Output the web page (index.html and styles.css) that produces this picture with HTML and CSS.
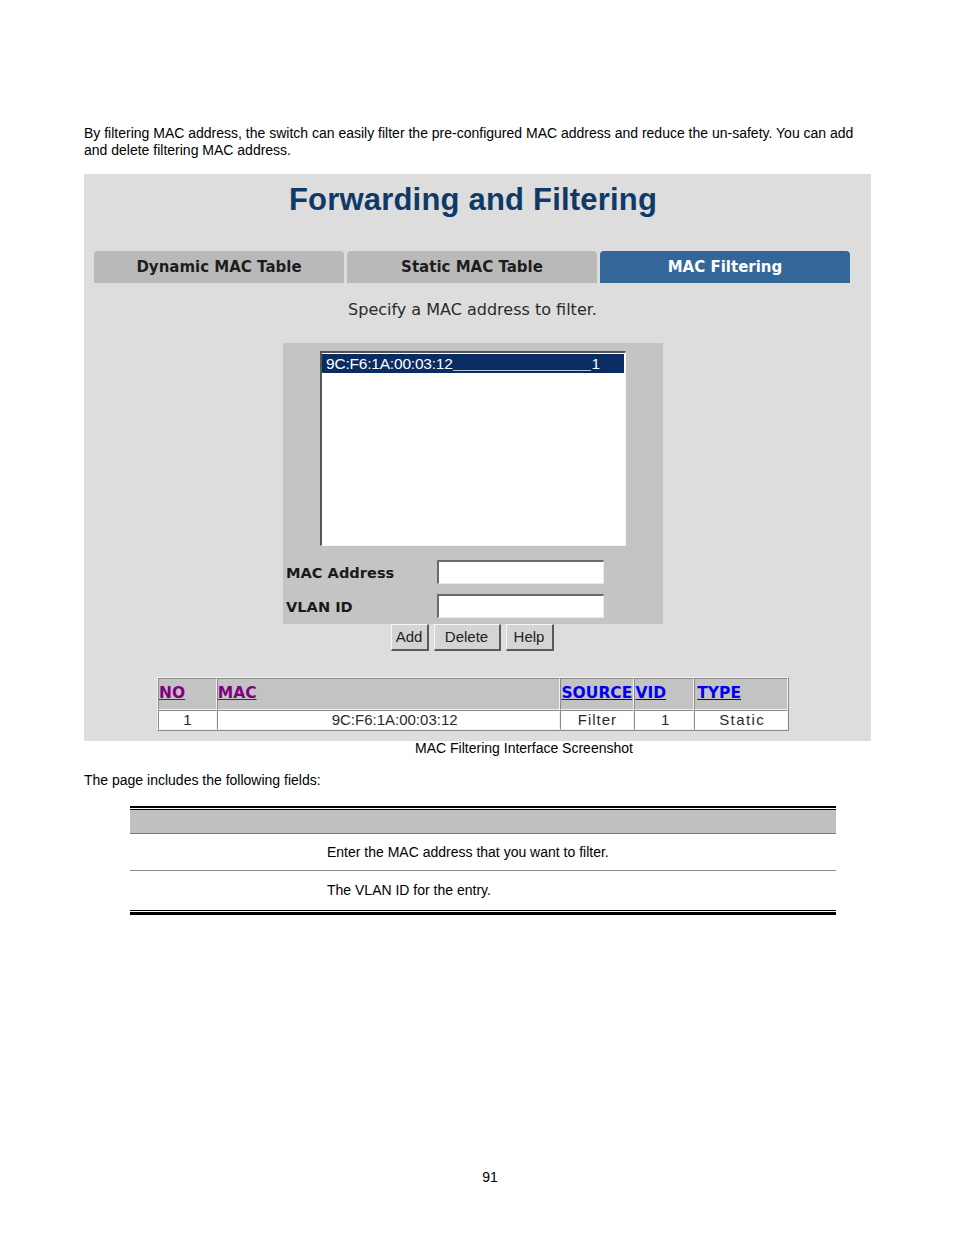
FILE: index.html
```html
<!DOCTYPE html>
<html>
<head>
<meta charset="utf-8">
<link rel="stylesheet" href="styles.css">
</head>
<body>
<div class="page">
  <p class="intro">By filtering MAC address, the switch can easily filter the pre-configured MAC address and reduce the un-safety. You can add and delete filtering MAC address.</p>

  <div class="shot">
    <h1 class="title">Forwarding and Filtering</h1>
    <div class="tabs">
      <div class="tab">Dynamic MAC Table</div>
      <div class="tab">Static MAC Table</div>
      <div class="tab active">MAC Filtering</div>
    </div>
    <div class="specify">Specify a MAC address to filter.</div>
    <div class="panel">
      <div class="listbox">
        <div class="sel"><span>9C:F6:1A:00:03:12</span><span class="under"></span><span class="vid">1</span></div>
      </div>
      <div class="frow"><span class="flabel">MAC Address</span><span class="finput"></span></div>
      <div class="frow"><span class="flabel">VLAN ID</span><span class="finput"></span></div>
    </div>
    <div class="buttons">
      <span class="btn b-add">Add</span>
      <span class="btn b-del">Delete</span>
      <span class="btn b-help">Help</span>
    </div>
    <table class="mtable">
      <tr class="hrow">
        <th class="c-no"><a class="visited">NO</a></th>
        <th class="c-mac"><a class="visited">MAC</a></th>
        <th class="c-src"><a class="link">SOURCE</a></th>
        <th class="c-vid"><a class="link">VID</a></th>
        <th class="c-type"><a class="link">TYPE</a></th>
      </tr>
      <tr class="drow">
        <td class="d-no">1</td>
        <td class="d-mac">9C:F6:1A:00:03:12</td>
        <td class="d-src">Filter</td>
        <td class="d-vid">1</td>
        <td class="d-type">Static</td>
      </tr>
    </table>
  </div>
  <div class="caption">MAC Filtering Interface Screenshot</div>

  <p class="lead">The page includes the following fields:</p>

  <div class="fields">
    <div class="fhead"></div>
    <div class="fline">Enter the MAC address that you want to filter.</div>
    <div class="fline last">The VLAN ID for the entry.</div>
  </div>

  <div class="pnum">91</div>
</div>
</body>
</html>
```

FILE: styles.css
```css
html, body {
  margin: 0;
  padding: 0;
  background: #ffffff;
}
.page {
  width: 954px;
  height: 1235px;
  font-family: "Liberation Sans", Arial, sans-serif;
  color: #000;
  overflow: hidden;
}
.intro {
  margin: 0 0 0 84px;
  width: 787px;
  padding-top: 125px;
  font-size: 14px;
  line-height: 17px;
}
.shot {
  margin: 15px 0 0 84px;
  width: 787px;
  height: 567px;
  background: #dddddd;
  overflow: hidden;
  font-family: "DejaVu Sans", Verdana, sans-serif;
}
.title {
  margin: 0;
  padding: 4px 9px 0 0;
  height: 43px;
  text-align: center;
  font-family: "Liberation Sans", Arial, sans-serif;
  font-size: 31px;
  font-weight: bold;
  color: #0f3a68;
  line-height: 43px;
  letter-spacing: 0.2px;
}
.tabs {
  display: flex;
  gap: 3px;
  margin: 30px 0 0 10px;
}
.tab {
  width: 250px;
  height: 32px;
  line-height: 32px;
  background: #b9b9b9;
  border-radius: 4px 4px 0 0;
  text-align: center;
  font-size: 15px;
  font-weight: bold;
  color: #1d1d1d;
}
.tab.active {
  background: #336699;
  color: #ffffff;
}
.specify {
  margin-top: 17px;
  text-align: center;
  font-size: 16px;
  color: #2a2a2a;
  line-height: 20px;
  margin-left: -10px;
}
.panel {
  margin: 23px 0 0 199px;
  width: 380px;
  height: 281px;
  background: #c4c4c4;
  padding-top: 8px;
  box-sizing: border-box;
}
.listbox {
  margin-left: 37px;
  width: 306px;
  height: 195px;
  box-sizing: border-box;
  background: #ffffff;
  border-style: solid;
  border-width: 2px 1px 1px 2px;
  border-color: #555555 #f4f4f4 #f4f4f4 #555555;
  padding: 1px 1px 0 0;
}
.sel {
  height: 19px;
  background: #0a2c62;
  color: #ffffff;
  font-family: "Liberation Sans", Arial, sans-serif;
  font-size: 15.5px;
  line-height: 19px;
  padding-left: 4px;
  display: flex;
  align-items: center;
  letter-spacing: -0.2px;
}
.under {
  flex: 1;
  height: 1px;
  background: #b8c4d8;
  align-self: flex-end;
  margin: 0 1px 2px 0;
}
.vid {
  padding-right: 24px;
}
.frow {
  display: flex;
  align-items: center;
  height: 34px;
}
.listbox + .frow { margin-top: 9px; }
.flabel {
  width: 154px;
  padding-left: 3px;
  box-sizing: border-box;
  font-size: 14.6px;
  font-weight: bold;
  color: #1a1a1a;
}
.finput {
  width: 167px;
  height: 24px;
  box-sizing: border-box;
  background: #ffffff;
  border-style: solid;
  border-width: 2px 1px 1px 2px;
  border-color: #6a6a6a #e8e8e8 #e8e8e8 #6a6a6a;
}
.buttons {
  margin-left: 199px;
  width: 380px;
  display: flex;
  justify-content: center;
  gap: 5px;
  height: 27px;
}
.btn {
  display: inline-block;
  height: 27px;
  box-sizing: border-box;
  text-align: center;
  background: #d4d4d4;
  border-style: solid;
  border-width: 1px 2px 2px 1px;
  border-color: #f5f5f5 #5a5a5a #5a5a5a #f5f5f5;
  font-family: "Liberation Sans", Arial, sans-serif;
  font-size: 15px;
  line-height: 24px;
  color: #222;
}
.b-add { width: 38px; margin-left: -2px; }
.b-del { width: 67px; }
.b-help { width: 48px; }
.mtable {
  margin: 26px 0 0 73px;
  width: 632px;
  border-collapse: separate;
  border-spacing: 0;
  border-style: solid;
  border-width: 1px;
  border-color: #f2f2f2 #8a8a8a #8a8a8a #f2f2f2;
}
.mtable th, .mtable td {
  padding: 0;
  border-style: solid;
  border-width: 1px;
  border-color: #8a8a8a #f2f2f2 #f2f2f2 #8a8a8a;
}
.hrow th {
  height: 24px;
  background: #c3c3c3;
  text-align: left;
  vertical-align: bottom;
  font-size: 15.5px;
  font-weight: bold;
  line-height: 20px;
  padding-bottom: 6px;
}
.hrow a { text-decoration: underline; }
.visited { color: #800080; }
.link { color: #0000ee; }
.c-no { width: 57px; }
.c-mac { width: 343px; }
.c-src { width: 72px; }
.c-vid { width: 58px; }
.c-type { width: 92px; }
.c-type a { margin-left: 2px; }
.drow td {
  height: 18px;
  background: #ffffff;
  font-family: "Liberation Sans", Arial, sans-serif;
  font-size: 15px;
  line-height: 18px;
  color: #2a2a2a;
  text-align: center;
}
.d-mac { padding-left: 12px !important; }
.d-src { letter-spacing: 1px; }
.d-vid { text-align: right !important; padding-right: 24px !important; }
.d-type { padding-left: 2px !important; letter-spacing: 1.4px; }
.caption {
  margin: 0 0 0 84px;
  width: 880px;
  text-align: center;
  font-size: 14px;
  line-height: 15px;
}
.lead {
  margin: 17px 0 0 84px;
  font-size: 14px;
  line-height: 15px;
}
.fields {
  margin: 18px 0 0 130px;
  width: 706px;
  border-top: 2px solid #000;
  border-bottom: 3px solid #000;
  font-size: 14px;
}
.fhead {
  height: 23px;
  margin-top: 1px;
  border-top: 1px solid #000;
  background: #c0c0c0;
  border-bottom: 1px solid #7c7c7c;
}
.fline {
  height: 36px;
  line-height: 36px;
  padding-left: 197px;
  border-bottom: 1px solid #8a8a8a;
}
.fline.last {
  height: 39px;
  line-height: 38px;
  border-bottom: 1px solid #000;
  margin-bottom: 1px;
}
.pnum {
  margin-top: 254px;
  text-align: center;
  font-size: 14px;
  padding-left: 26px;
}
```
